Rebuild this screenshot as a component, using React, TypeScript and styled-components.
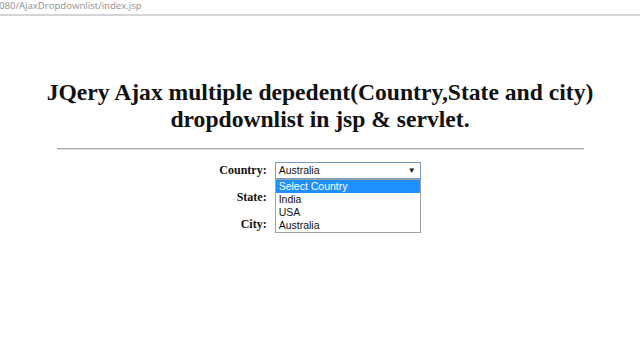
import React from "react";
import styled, { createGlobalStyle } from "styled-components";

const Global = createGlobalStyle`
  html, body { margin: 0; padding: 0; background: #fff; }
  body { width: 640px; height: 360px; overflow: hidden; }
`;

const Page = styled.div`
  width: 640px;
  height: 360px;
  display: flex;
  flex-direction: column;
  background: #fff;
`;

const AddressBar = styled.div`
  height: 14px;
  border-bottom: 2px solid #d4d4d4;
  font-family: "Open Sans", "Liberation Sans", sans-serif;
  font-size: 9.6px;
  line-height: 12px;
  color: #909090;
  margin-left: -1px;
  white-space: nowrap;
`;

const Content = styled.div`
  display: flex;
  flex-direction: column;
  align-items: center;
  padding-top: 63px;
`;

const Title = styled.h1`
  margin: 0;
  font-family: "Liberation Serif", "Times New Roman", serif;
  font-weight: bold;
  font-size: 23.6px;
  line-height: 27px;
  color: #111;
  text-align: center;
`;

const Rule = styled.hr`
  width: 527px;
  margin: 15px 0 0 0;
  border: none;
  border-top: 1px solid #a8a8a8;
  border-bottom: 1px solid #e0e0e0;
`;

const Form = styled.div`
  display: grid;
  grid-template-columns: auto 146px;
  column-gap: 8px;
  row-gap: 10px;
  margin-top: 12px;
  margin-left: 0;
  position: relative;
`;

const Label = styled.div`
  font-family: "Liberation Serif", "Times New Roman", serif;
  font-weight: bold;
  font-size: 12px;
  line-height: 17px;
  color: #111;
  text-align: right;
`;

const SelectWrap = styled.div`
  position: relative;
  height: 17px;
`;

const SelectBox = styled.div<{ $focused?: boolean }>`
  box-sizing: border-box;
  height: 17px;
  border: 1px solid ${(p) => (p.$focused ? "#7a9cc6" : "#a9a9a9")};
  background: #fff;
  font-family: "Liberation Sans", Arial, sans-serif;
  font-size: 10.5px;
  line-height: 15px;
  padding-left: 3px;
  color: #111;
  display: flex;
  justify-content: space-between;
  align-items: center;
`;

const Arrow = styled.span`
  font-size: 8px;
  margin-right: 4px;
  color: #111;
`;

const List = styled.div`
  position: absolute;
  top: 17px;
  left: 0;
  width: 146px;
  box-sizing: border-box;
  border: 1px solid #a0a0a0;
  background: #fff;
  z-index: 2;
`;

const Option = styled.div<{ $active?: boolean }>`
  height: 13px;
  line-height: 13px;
  padding-left: 3px;
  font-family: "Liberation Sans", Arial, sans-serif;
  font-size: 10.5px;
  background: ${(p) => (p.$active ? "#1e90ff" : "#fff")};
  color: ${(p) => (p.$active ? "#fff" : "#111")};
`;

export default function App() {
  return (
    <Page>
      <Global />
      <AddressBar>080/AjaxDropdownlist/index.jsp</AddressBar>
      <Content>
        <Title>
          JQery Ajax multiple depedent(Country,State and city)
          <br />
          dropdownlist in jsp &amp; servlet.
        </Title>
        <Rule />
        <Form>
          <Label>Country:</Label>
          <SelectWrap>
            <SelectBox $focused>
              Australia<Arrow>▼</Arrow>
            </SelectBox>
            <List>
              <Option $active>Select Country</Option>
              <Option>India</Option>
              <Option>USA</Option>
              <Option>Australia</Option>
            </List>
          </SelectWrap>
          <Label>State:</Label>
          <SelectWrap>
            <SelectBox />
          </SelectWrap>
          <Label>City:</Label>
          <SelectWrap>
            <SelectBox />
          </SelectWrap>
        </Form>
      </Content>
    </Page>
  );
}
